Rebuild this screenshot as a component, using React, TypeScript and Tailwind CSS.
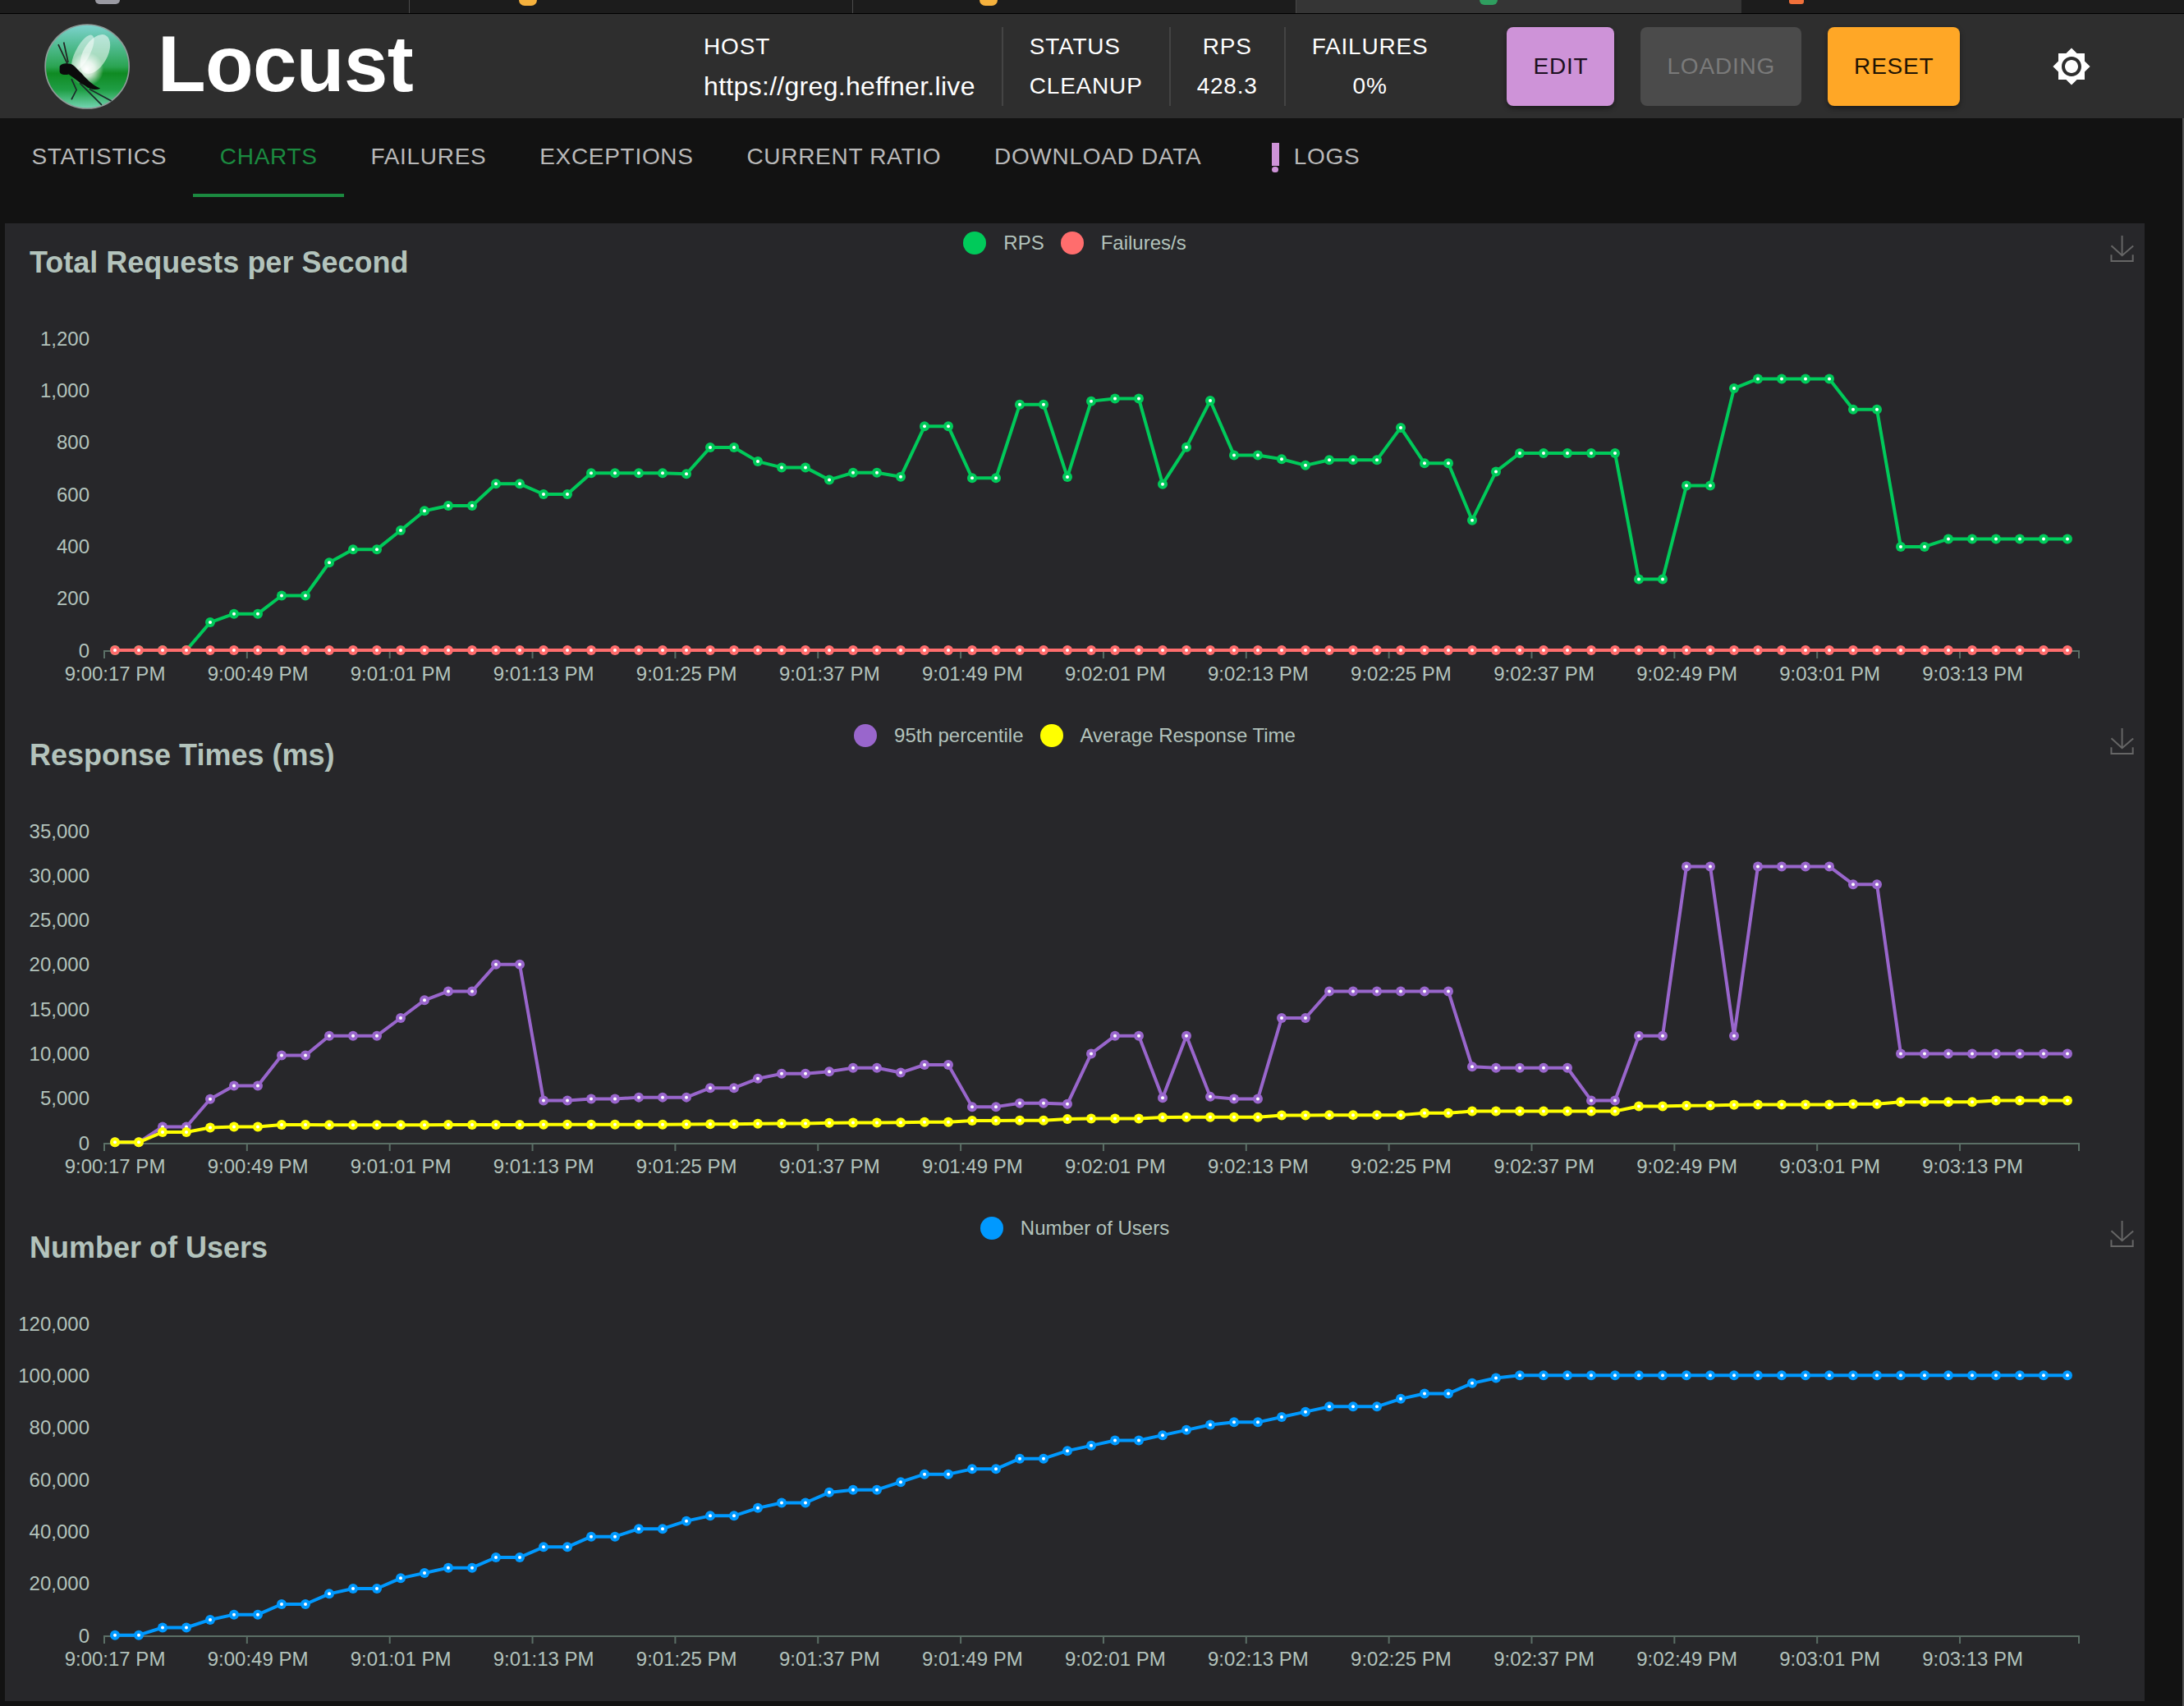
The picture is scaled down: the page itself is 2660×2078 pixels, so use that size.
import React from 'react';

const X_LABELS = [
  '9:00:17 PM', '9:00:49 PM', '9:01:01 PM', '9:01:13 PM', '9:01:25 PM', '9:01:37 PM', '9:01:49 PM',
  '9:02:01 PM', '9:02:13 PM', '9:02:25 PM', '9:02:37 PM', '9:02:49 PM', '9:03:01 PM', '9:03:13 PM',
];

const rps = [
  0, 0, 0, 0, 107, 140, 140, 210, 210, 337, 388, 388, 461, 536, 556, 556, 640, 640, 600, 600, 681,
  681, 681, 681, 678, 780, 780, 726, 703, 703, 655, 683, 683, 667, 861, 861, 662, 662, 945, 945, 666,
  958, 968, 968, 639, 781, 960, 750, 750, 735, 711, 732, 732, 732, 856, 719, 719, 500, 687, 758, 758,
  758, 758, 758, 273, 273, 633, 633, 1007, 1044, 1044, 1044, 1044, 926, 926, 398, 398, 428, 428, 428,
  428, 428, 428,
];
const failures = new Array(83).fill(0);

const p95 = [
  60, 60, 1800, 1800, 4900, 6400, 6400, 9800, 9800, 12000, 12000, 12000, 14000, 16000, 17000, 17000,
  20000, 20000, 4750, 4750, 4930, 4930, 5100, 5100, 5100, 6150, 6150, 7200, 7750, 7750, 8000, 8400,
  8400, 7870, 8750, 8750, 4040, 4040, 4440, 4440, 4350, 10000, 12000, 12000, 5050, 12000, 5170, 4930,
  4930, 14000, 14000, 17000, 17000, 17000, 17000, 17000, 17000, 8540, 8400, 8400, 8400, 8400, 4750,
  4750, 12000, 12000, 31000, 31000, 12000, 31000, 31000, 31000, 31000, 29000, 29000, 10000, 10000,
  10000, 10000, 10000, 10000, 10000, 10000,
];
const avg = [
  60, 60, 1200, 1200, 1700, 1800, 1800, 2020, 2020, 2000, 2000, 2000, 2000, 2000, 2020, 2020, 2020,
  2020, 2040, 2040, 2040, 2040, 2060, 2060, 2080, 2100, 2100, 2140, 2170, 2170, 2230, 2260, 2260, 2290,
  2320, 2320, 2480, 2480, 2510, 2510, 2660, 2725, 2725, 2725, 2850, 2880, 2880, 2880, 2880, 3090, 3090,
  3120, 3120, 3120, 3120, 3340, 3340, 3550, 3550, 3550, 3550, 3550, 3550, 3550, 4100, 4100, 4160, 4190,
  4250, 4290, 4290, 4290, 4290, 4350, 4350, 4590, 4590, 4590, 4590, 4750, 4750, 4750, 4750,
];

const users = [
  100, 100, 3000, 3000, 6000, 8000, 8000, 12000, 12000, 16000, 18000, 18000, 22000, 24000, 26000, 26000,
  30000, 30000, 34000, 34000, 38000, 38000, 41000, 41000, 44000, 46000, 46000, 49000, 51000, 51000,
  55000, 56000, 56000, 59000, 62000, 62000, 64000, 64000, 68000, 68000, 71000, 73000, 75000, 75000,
  77000, 79000, 81000, 82000, 82000, 84000, 86000, 88000, 88000, 88000, 91000, 93000, 93000, 97000,
  99000, ...new Array(24).fill(100000),
];

interface ChartProps {
  title: string;
  max: number;
  ticks: number[];
  legend: { name: string; dot: string }[];
  series: { values: number[]; color: string }[];
}

const Y0 = 520;
const PLOT_H = 380;
const pointX = (i: number) => 134 + i * 29;

const Chart: React.FC<ChartProps> = ({ title, max, ticks, legend, series }) => {
  const toY = (v: number) => Y0 - (v / max) * PLOT_H;
  return (
    <section className="h-[600px] flex flex-col">
      <div className="h-[80px] grid grid-cols-[1fr_auto_1fr]">
        <h2 className="pl-[30px] pt-[28px] text-[36px] leading-[40px] font-bold text-[#b3c3bc]">{title}</h2>
        <div className="flex items-start pt-[10px] gap-[20px] text-[24px] leading-[28px] text-[#b3c3bc]">
          {legend.map((item) => (
            <div key={item.name} className="flex items-center gap-[21px]">
              <span className={`w-[28px] h-[28px] rounded-full ${item.dot}`} />
              <span>{item.name}</span>
            </div>
          ))}
        </div>
        <div className="flex justify-end pr-[11px] pt-[15px]">
          <svg width="32" height="32" viewBox="0 0 60 60" fill="none" stroke="#666" strokeWidth="3.7">
            <path d="M4.7,22.9L29.3,45.5L54.7,23.4M4.6,43.6L4.6,58L53.8,58L53.8,43.6M29.2,45.1L29.2,0" />
          </svg>
        </div>
      </div>
      <svg width="2606" height="520" viewBox="0 80 2606 520" className="block">
        {ticks.map((t) => (
          <text key={t} x="103" y={toY(t)} textAnchor="end" dominantBaseline="central" fontSize="24" fill="#b3c3bc">
            {t.toLocaleString('en-US')}
          </text>
        ))}
        <path
          d={`M121 ${Y0 + 1}H2527 ${Array.from({ length: 14 }, (_, k) => `M${121 + k * 173.85} ${Y0}v10`).join(' ')} M2526 ${Y0}v10`}
          stroke="#5b6f66"
          strokeWidth="2"
          fill="none"
        />
        {X_LABELS.map((label, k) => (
          <text key={label} x={134 + k * 174.05} y={Y0 + 28} textAnchor="middle" dominantBaseline="central" fontSize="24" fill="#b3c3bc">
            {label}
          </text>
        ))}
        {series.map((s) => (
          <g key={s.color}>
            <polyline
              points={s.values.map((v, i) => `${pointX(i)},${toY(v)}`).join(' ')}
              fill="none"
              stroke={s.color}
              strokeWidth="4"
              strokeLinejoin="bevel"
            />
            {s.values.map((v, i) => (
              <g key={i}>
                <circle cx={pointX(i)} cy={toY(v)} r="6" fill={s.color} />
                <circle cx={pointX(i)} cy={toY(v)} r="2" fill="#fff" />
              </g>
            ))}
          </g>
        ))}
      </svg>
    </section>
  );
};

const LocustLogo = () => (
  <svg width="104" height="104" viewBox="43 25 307 310">
    <defs>
      <linearGradient id="orb" x1="0" y1="0" x2="0" y2="1">
        <stop offset="0" stopColor="#7ed3cf" />
        <stop offset="0.28" stopColor="#4cb98a" />
        <stop offset="0.5" stopColor="#2ba452" />
        <stop offset="0.58" stopColor="#0f8a22" />
        <stop offset="0.78" stopColor="#1f9e45" />
        <stop offset="1" stopColor="#74d6b4" />
      </linearGradient>
      <radialGradient id="glow" cx="0.5" cy="0.5" r="0.5">
        <stop offset="0" stopColor="#ffffff" />
        <stop offset="0.45" stopColor="#ffffff" stopOpacity="0.75" />
        <stop offset="1" stopColor="#ffffff" stopOpacity="0" />
      </radialGradient>
    </defs>
    <circle cx="197" cy="180" r="152" fill="url(#orb)" stroke="#8f9c99" strokeWidth="5" />
    <ellipse cx="181" cy="130" rx="26" ry="72" transform="rotate(28 181 130)" fill="#fff" fillOpacity="0.5" />
    <ellipse cx="226" cy="135" rx="44" ry="78" transform="rotate(30 226 135)" fill="#fff" fillOpacity="0.55" />
    <circle cx="195" cy="190" r="62" fill="url(#glow)" />
    <path d="M92 100L125 170M112 92L128 165" stroke="#222" strokeWidth="5" fill="none" />
    <path d="M140 225L158 265L140 300M170 240L250 320M205 262L285 305" stroke="#1c2a2a" strokeWidth="5" fill="none" />
    <path d="M97 180C100 170 120 166 135 170C150 172 160 190 176 204C190 220 215 248 245 260C225 268 205 262 190 250C170 240 150 222 130 208C115 212 98 210 97 198Z" fill="#0b0b0b" />
  </svg>
);

const Info: React.FC<{ label: string; value: string; center?: boolean; valueClass?: string }> = ({ label, value, center, valueClass }) => (
  <div className={`h-[96px] px-[32px] flex flex-col justify-between py-[7px] border-r-2 border-[#444] last:border-r-0 ${center ? 'items-center' : 'items-start'}`}>
    <span className="text-[28px] leading-[34px] tracking-[0.8px]">{label}</span>
    <span className={valueClass ?? 'text-[28px] leading-[34px] tracking-[0.8px]'}>{value}</span>
  </div>
);

const tabs = ['STATISTICS', 'CHARTS', 'FAILURES', 'EXCEPTIONS', 'CURRENT RATIO', 'DOWNLOAD DATA'];

export default function App() {
  return (
    <div className="w-[2660px] h-[2078px] overflow-hidden bg-[#121212] font-['Liberation_Sans',Arial,sans-serif] text-white">
      {/* browser tab strip, cut off at the top of the shot */}
      <div className="h-[17px] flex border-b border-[#000] bg-[#1c1c1c] overflow-hidden">
        <div className="w-[499px] border-r border-[#4a4a4a] pl-[116px]"><div className="w-[30px] h-[5px] rounded-b-[5px] bg-[#9a9aa2]" /></div>
        <div className="w-[540px] border-r border-[#4a4a4a] pl-[133px]"><div className="w-[22px] h-[7px] rounded-b-full bg-[#f5b13d]" /></div>
        <div className="w-[540px] border-r border-[#4a4a4a] pl-[154px]"><div className="w-[22px] h-[7px] rounded-b-full bg-[#f5b13d]" /></div>
        <div className="w-[542px] bg-[#353535] pl-[223px]"><div className="w-[22px] h-[6px] rounded-b-full bg-[#2f9e5f]" /></div>
        <div className="flex-1 pl-[58px]"><div className="w-[18px] h-[5px] rounded-b-[3px] bg-[#f0703a]" /></div>
      </div>

      <header className="h-[127px] bg-[#2e2e2e] flex items-center">
        <div className="w-[54px]" />
        <LocustLogo />
        <span className="ml-[34px] pb-[6px] text-[96px] leading-none font-bold tracking-[-0.6px]">Locust</span>
        <div className="ml-[322px] flex items-center">
          <Info label="HOST" value="https://greg.heffner.live" valueClass="text-[32px] leading-[34px] tracking-[0.3px]" />
          <Info label="STATUS" value="CLEANUP" />
          <Info label="RPS" value="428.3" center />
          <Info label="FAILURES" value="0%" center />
        </div>
        <div className="ml-[64px] flex items-center gap-[32px] text-[28px] tracking-[0.8px]">
          <button className="h-[96px] px-[32px] rounded-[8px] bg-[#ce93d8] text-[#1c1020] shadow-[0_3px_6px_rgba(0,0,0,0.4)]">EDIT</button>
          <button className="h-[96px] px-[32px] rounded-[8px] bg-[#4b4b4b] text-[#7a7a7a]">LOADING</button>
          <button className="h-[96px] px-[32px] rounded-[8px] bg-[#ffa726] text-[#1f1404] shadow-[0_3px_6px_rgba(0,0,0,0.4)]">RESET</button>
        </div>
        <svg className="ml-[112px]" width="48" height="48" viewBox="0 0 24 24" fill="#fff">
          <path d="M20 8.69V4h-4.69L12 .69 8.69 4H4v4.69L.69 12 4 15.31V20h4.69L12 23.31 15.31 20H20v-4.69L23.31 12 20 8.69zM12 18c-3.31 0-6-2.69-6-6s2.69-6 6-6 6 2.69 6 6-2.69 6-6 6zm0-10c-2.21 0-4 1.79-4 4s1.79 4 4 4 4-1.79 4-4-1.79-4-4-4z" />
        </svg>
      </header>

      <div className="border-r-2 border-[#4f4f4f]">
        <nav className="h-[128px] pl-[6px] flex items-start text-[28px] tracking-[0.7px] text-[#b9b9b9]">
          {tabs.map((tab) => (
            <div
              key={tab}
              className={`h-[96px] px-[32.4px] flex items-center ${tab === 'CHARTS' ? 'text-[#1b8a40] border-b-4 border-[#1b8a40] pt-[2px]' : 'pb-[2px]'}`}
            >
              {tab}
            </div>
          ))}
          <div className="h-[96px] pl-[53px] pr-[32px] flex items-center pb-[2px]">
            <span className="flex flex-col items-center gap-[1px] mr-[18px] mt-[2px]">
              <span className="w-[9px] h-[28px] bg-[#ce93d8]" />
              <span className="w-[8px] h-[7px] rounded-full bg-[#ce93d8]" />
            </span>
            LOGS
          </div>
        </nav>

        <main className="ml-[6px] w-[2606px] h-[1800px] bg-[#27272a]">
          <Chart
            title="Total Requests per Second"
            max={1200}
            ticks={[0, 200, 400, 600, 800, 1000, 1200]}
            legend={[
              { name: 'RPS', dot: 'bg-[#00ca5a]' },
              { name: 'Failures/s', dot: 'bg-[#ff6d6d]' },
            ]}
            series={[
              { values: rps, color: '#00ca5a' },
              { values: failures, color: '#ff6d6d' },
            ]}
          />
          <Chart
            title="Response Times (ms)"
            max={35000}
            ticks={[0, 5000, 10000, 15000, 20000, 25000, 30000, 35000]}
            legend={[
              { name: '95th percentile', dot: 'bg-[#9966cc]' },
              { name: 'Average Response Time', dot: 'bg-[#ffff00]' },
            ]}
            series={[
              { values: p95, color: '#9966cc' },
              { values: avg, color: '#ffff00' },
            ]}
          />
          <Chart
            title="Number of Users"
            max={120000}
            ticks={[0, 20000, 40000, 60000, 80000, 100000, 120000]}
            legend={[{ name: 'Number of Users', dot: 'bg-[#0099ff]' }]}
            series={[{ values: users, color: '#0099ff' }]}
          />
        </main>
        <div className="h-[6px]" />
      </div>
    </div>
  );
}
